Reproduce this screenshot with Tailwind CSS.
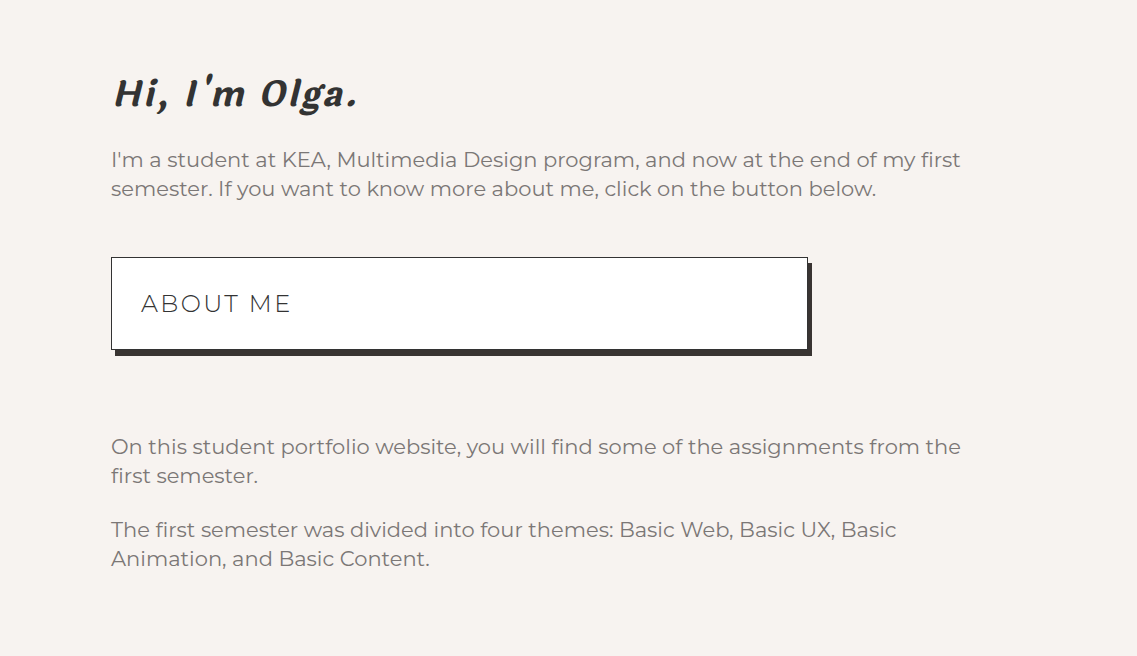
<!DOCTYPE html>
<html lang="en">
<head>
<meta charset="utf-8">
<meta name="viewport" content="width=device-width, initial-scale=1">
<title>Olga – Portfolio</title>
<script src="https://cdn.jsdelivr.net/npm/@tailwindcss/browser@4"></script>
</head>
<body class="min-h-screen bg-[#f7f3f0] font-['Montserrat','Inter',sans-serif] text-[#333333]">
<main class="px-[111px] pt-[69px] pb-16">
<h1 class="font-['Laila','Lato',sans-serif] text-[35px] leading-[52px] font-bold italic tracking-[2px]">Hi, I'm Olga.</h1>
<p class="mt-6 text-[21px] leading-[29px] text-[#7b7776]">I'm a student at KEA, Multimedia Design program, and now at the end of my first<br>semester. If you want to know more about me, click on the button below.</p>
<button type="button" class="mt-[54px] block w-[697px] max-w-full border border-[#333333] bg-white px-[29px] py-7 text-left text-2xl leading-[35px] font-light tracking-widest shadow-[4px_6px_0_#393432]">ABOUT ME</button>
<p class="mt-[82px] text-[21px] leading-[29px] text-[#7b7776]">On this student portfolio website, you will find some of the assignments from the<br>first semester.</p>
<p class="mt-[25px] text-[21px] leading-[29px] text-[#7b7776]">The first semester was divided into four themes: Basic Web, Basic UX, Basic<br>Animation, and Basic Content.</p>
</main>
</body>
</html>
